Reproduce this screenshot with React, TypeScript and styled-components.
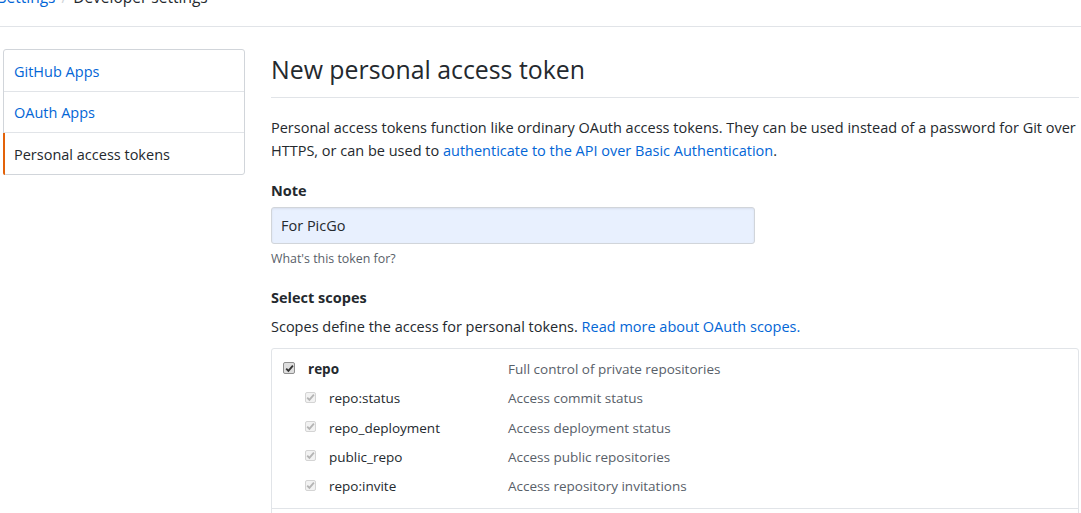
import React from "react";
import styled, { createGlobalStyle } from "styled-components";

const GlobalStyle = createGlobalStyle`
  html, body { margin: 0; padding: 0; background: #fff; }
  body {
    font-family: "Open Sans", "Noto Sans", sans-serif;
    color: #24292e;
    font-size: 14.5px;
    line-height: 23px;
    overflow: hidden;
  }
  * { box-sizing: border-box; }
`;

const Header = styled.header`
  height: 27px;
  border-bottom: 1px solid #e1e4e8;
  overflow: hidden;
`;

const Breadcrumb = styled.nav`
  display: flex;
  gap: 6px;
  margin: -13px 0 0 -2px;
  font-size: 15.5px;
  line-height: 20px;
  white-space: nowrap;
`;

const Crumb = styled.a<{ $current?: boolean }>`
  color: ${(p) => (p.$current ? "#24292e" : "#0366d6")};
  text-decoration: none;
`;

const Sep = styled.span`
  color: #d1d5da;
`;

const Layout = styled.div`
  display: flex;
  align-items: flex-start;
  gap: 26px;
  padding: 22px 0 0 3px;
`;

const SideMenu = styled.nav`
  width: 242px;
  flex: none;
  border: 1px solid #d1d5da;
  border-radius: 3px;
  background: #fff;
`;

const MenuItem = styled.a<{ $selected?: boolean }>`
  position: relative;
  display: block;
  padding: 9.5px 10px 8px;
  color: ${(p) => (p.$selected ? "#24292e" : "#0366d6")};
  text-decoration: none;
  border-bottom: 1px solid #e1e4e8;
  &:last-child { border-bottom: 0; }
  ${(p) =>
    p.$selected &&
    `
    &::before {
      content: "";
      position: absolute;
      left: -1px;
      top: 0;
      bottom: -1px;
      width: 2px;
      background: #e36209;
      border-bottom-left-radius: 3px;
    }
  `}
`;

const Main = styled.main`
  width: 808px;
  flex: none;
`;

const Subhead = styled.div`
  margin-top: 5px;
  padding-bottom: 13px;
  border-bottom: 1px solid #e1e4e8;
`;

const Title = styled.h2`
  margin: 0;
  font-size: 24.85px;
  line-height: 30px;
  font-weight: 400;
  color: #24292e;
`;

const Intro = styled.p`
  margin: 18px 0 0;
  white-space: nowrap;
`;

const Link = styled.a`
  color: #0366d6;
  text-decoration: none;
`;

const Field = styled.div`
  margin-top: 17px;
`;

const Label = styled.label`
  display: block;
  font-weight: 700;
`;

const Input = styled.input`
  display: block;
  margin-top: 5px;
  width: 484px;
  height: 37px;
  padding: 0 9px;
  font: inherit;
  color: #24292e;
  background: #e8f0fe;
  border: 1px solid #d1d5da;
  border-radius: 3px;
  box-shadow: inset 0 1px 2px rgba(27, 31, 35, 0.075);
  outline: none;
`;

const Note = styled.p`
  margin: 5px 0 0;
  font-size: 12.4px;
  line-height: 20px;
  color: #586069;
`;

const SectionTitle = styled.h3`
  margin: 17px 0 0;
  font-size: 14.5px;
  line-height: 23px;
  font-weight: 700;
`;

const SectionText = styled.p`
  margin: 6px 0 0;
`;

const ScopeBox = styled.div`
  margin-top: 10px;
  border: 1px solid #e1e4e8;
  border-radius: 3px;
  font-size: 13.5px;
`;

const ScopeGroup = styled.div`
  padding: 9px 0 10px 11px;
  border-bottom: 1px solid #e1e4e8;
`;

const Row = styled.div`
  display: grid;
  grid-template-columns: 225px 1fr;
  line-height: 23px;
  & + & { margin-top: 6.3px; }
`;

const ScopeName = styled.label<{ $nested?: boolean }>`
  display: flex;
  align-items: center;
  gap: 13px;
  padding-left: ${(p) => (p.$nested ? 22 : 0)}px;
  font-weight: ${(p) => (p.$nested ? 400 : 700)};
  color: #24292e;
`;

const Box = styled.span<{ $disabled?: boolean }>`
  display: inline-flex;
  align-items: center;
  justify-content: center;
  width: ${(p) => (p.$disabled ? 11 : 12)}px;
  height: ${(p) => (p.$disabled ? 11 : 12)}px;
  flex: none;
  border: 1px solid ${(p) => (p.$disabled ? "#d4d4d4" : "#8f8f8f")};
  border-radius: 2px;
  background: ${(p) => (p.$disabled ? "#f2f2f2" : "#dedede")};
  color: ${(p) => (p.$disabled ? "#b4b4b4" : "#333")};
  margin-top: -3px;
`;

const Desc = styled.span`
  color: #586069;
`;

const Check = ({ disabled }: { disabled?: boolean }) => (
  <Box $disabled={disabled}>
    <svg width="9" height="9" viewBox="0 0 9 9">
      <path d="M1.2 4.6 L3.4 6.9 L7.9 1.6" fill="none" stroke="currentColor" strokeWidth="1.8" />
    </svg>
  </Box>
);

const subScopes = [
  { name: "repo:status", desc: "Access commit status" },
  { name: "repo_deployment", desc: "Access deployment status" },
  { name: "public_repo", desc: "Access public repositories" },
  { name: "repo:invite", desc: "Access repository invitations" },
];

export default function App() {
  return (
    <>
      <GlobalStyle />
      <Header>
        <Breadcrumb>
          <Crumb>Settings</Crumb>
          <Sep>/</Sep>
          <Crumb $current>Developer settings</Crumb>
        </Breadcrumb>
      </Header>
      <Layout>
        <SideMenu>
          <MenuItem>GitHub Apps</MenuItem>
          <MenuItem>OAuth Apps</MenuItem>
          <MenuItem $selected>Personal access tokens</MenuItem>
        </SideMenu>
        <Main>
          <Subhead>
            <Title>New personal access token</Title>
          </Subhead>
          <Intro>
            Personal access tokens function like ordinary OAuth access tokens. They can be used instead of a password for Git over
            <br />
            HTTPS, or can be used to <Link>authenticate to the API over Basic Authentication</Link>.
          </Intro>
          <Field>
            <Label>Note</Label>
            <Input defaultValue="For PicGo" />
            <Note>What's this token for?</Note>
          </Field>
          <SectionTitle>Select scopes</SectionTitle>
          <SectionText>
            Scopes define the access for personal tokens. <Link>Read more about OAuth scopes.</Link>
          </SectionText>
          <ScopeBox>
            <ScopeGroup>
              <Row>
                <ScopeName>
                  <Check />
                  repo
                </ScopeName>
                <Desc>Full control of private repositories</Desc>
              </Row>
              {subScopes.map((s) => (
                <Row key={s.name}>
                  <ScopeName $nested>
                    <Check disabled />
                    {s.name}
                  </ScopeName>
                  <Desc>{s.desc}</Desc>
                </Row>
              ))}
            </ScopeGroup>
            <ScopeGroup>
              <Row>
                <ScopeName>
                  <Check />
                  admin:org
                </ScopeName>
                <Desc>Full control of orgs and teams</Desc>
              </Row>
            </ScopeGroup>
          </ScopeBox>
        </Main>
      </Layout>
    </>
  );
}
